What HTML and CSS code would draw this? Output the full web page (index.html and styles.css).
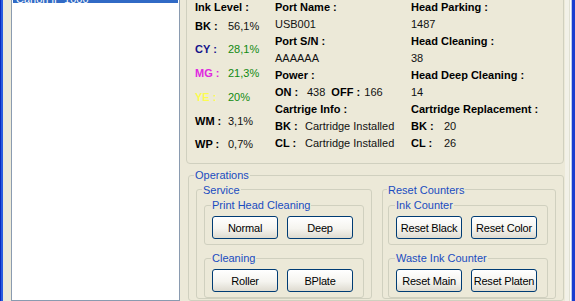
FILE: index.html
```html
<!DOCTYPE html>
<html lang="en">
<head>
    <meta charset="UTF-8">
    <meta name="viewport" content="width=device-width, initial-scale=1.0">
    <title>Printer Service Tool</title>
    <link rel="stylesheet" href="styles.css">
</head>
<body>

    <div class="window">
        <div class="edge-left"></div>

        <div class="client">
            <div class="printer-list">
                <div class="printer-item selected">Canon iP 1000</div>
            </div>

            <div class="panel">
                <div class="info-box">
                    <div class="col col-ink">
                        <div class="ink-head"><b>Ink Level :</b></div>
                        <div class="ink-row"><b class="lbl">BK :</b><span class="val">56,1%</span></div>
                        <div class="ink-row"><b class="lbl cy">CY :</b><span class="val pct">28,1%</span></div>
                        <div class="ink-row"><b class="lbl mg">MG :</b><span class="val pct">21,3%</span></div>
                        <div class="ink-row"><b class="lbl ye">YE :</b><span class="val pct">20%</span></div>
                        <div class="ink-row"><b class="lbl">WM :</b><span class="val">3,1%</span></div>
                        <div class="ink-row"><b class="lbl">WP :</b><span class="val">0,7%</span></div>
                    </div>

                    <div class="col col-port">
                        <div class="line"><b>Port Name :</b></div>
                        <div class="line val">USB001</div>
                        <div class="line"><b>Port S/N :</b></div>
                        <div class="line val">AAAAAA</div>
                        <div class="line"><b>Power :</b></div>
                        <div class="line"><b class="lbl-on">ON :</b><span class="val">438</span><b class="lbl-off">OFF :</b><span class="val">166</span></div>
                        <div class="line"><b>Cartrige Info :</b></div>
                        <div class="line"><b class="lbl-cart">BK :</b><span class="val">Cartridge Installed</span></div>
                        <div class="line"><b class="lbl-cart">CL :</b><span class="val">Cartridge Installed</span></div>
                    </div>

                    <div class="col col-head">
                        <div class="line"><b>Head Parking :</b></div>
                        <div class="line val">1487</div>
                        <div class="line"><b>Head Cleaning :</b></div>
                        <div class="line val">38</div>
                        <div class="line"><b>Head Deep Cleaning :</b></div>
                        <div class="line val">14</div>
                        <div class="line"><b>Cartridge Replacement :</b></div>
                        <div class="line"><b class="lbl">BK :</b><span class="val">20</span></div>
                        <div class="line"><b class="lbl">CL :</b><span class="val">26</span></div>
                    </div>
                </div>

                <fieldset class="group ops">
                    <legend>Operations</legend>
                    <div class="ops-row">
                        <fieldset class="group service">
                            <legend>Service</legend>
                            <fieldset class="group sub">
                                <legend>Print Head Cleaning</legend>
                                <div class="btn-row">
                                    <button class="btn">Normal</button>
                                    <button class="btn">Deep</button>
                                </div>
                            </fieldset>
                            <fieldset class="group sub">
                                <legend>Cleaning</legend>
                                <div class="btn-row">
                                    <button class="btn">Roller</button>
                                    <button class="btn">BPlate</button>
                                </div>
                            </fieldset>
                        </fieldset>

                        <fieldset class="group reset">
                            <legend>Reset Counters</legend>
                            <fieldset class="group sub">
                                <legend>Ink Counter</legend>
                                <div class="btn-row">
                                    <button class="btn">Reset Black</button>
                                    <button class="btn">Reset Color</button>
                                </div>
                            </fieldset>
                            <fieldset class="group sub">
                                <legend>Waste Ink Counter</legend>
                                <div class="btn-row">
                                    <button class="btn">Reset Main</button>
                                    <button class="btn">Reset Platen</button>
                                </div>
                            </fieldset>
                        </fieldset>
                    </div>
                </fieldset>
            </div>
        </div>

        <div class="edge-right"></div>
    </div>

</body>
</html>
```

FILE: styles.css
```css
body {
    margin: 0;
    overflow: hidden;
    background-color: #ECE9D8;
    font-family: "Liberation Sans", Arial, sans-serif;
    font-size: 11px;
    color: #000;
}

.window {
    display: flex;
    width: 575px;
    height: 301px;
    overflow: hidden;
}

.edge-left {
    flex: none;
    width: 3px;
    background: linear-gradient(to right, #0a2bbf 0 1px, #2a5ce0 1px 3px);
}

.edge-right {
    flex: none;
    width: 11px;
    background: linear-gradient(to right, #ECE9D8 0 1px, #f2f1e8 1px 5px, #e0e0d2 5px 6px, #ffffff 6px 7px, #b9c8ee 7px 8px, #1a3ccf 8px 11px);
}

.client {
    flex: 1;
    display: flex;
    gap: 6px;
    margin-top: -14px;
    padding-left: 8px;
    background-color: #ECE9D8;
}

/* printer list box */
.printer-list {
    flex: none;
    width: 169px;
    box-sizing: border-box;
    background-color: #fff;
    border: 1px solid #8a9bb0;
    padding: 4px 1px 0;
}

.printer-item {
    height: 12px;
    line-height: 16px;
    padding-left: 3px;
    overflow: hidden;
    white-space: nowrap;
}

.printer-item.selected {
    background-color: #316AC5;
    color: #fff;
}

/* right panel */
.panel {
    flex: none;
    width: 378px;
    display: flex;
    flex-direction: column;
}

.info-box {
    margin-top: 4px;
    height: 174px;
    box-sizing: border-box;
    border: 1px solid #D0D0BF;
    border-radius: 4px;
    padding: 7.5px 0 0 8px;
    display: flex;
    white-space: nowrap;
}

.col-ink {
    width: 80px;
    padding-top: 1px;
}

.col-port {
    width: 136px;
}

.col-head {
    flex: 1;
}

.ink-head {
    line-height: 15px;
}

.ink-row {
    line-height: 23.8px;
}

.line {
    line-height: 17.1px;
}

.lbl {
    display: inline-block;
    width: 33px;
}

.lbl-cart {
    display: inline-block;
    width: 30px;
}

.lbl-on {
    display: inline-block;
    width: 32px;
}

.lbl-off {
    display: inline-block;
    width: 33px;
    margin-left: 6px;
}

.val {
    font-weight: normal;
    color: #111;
}

.val.pct {
    color: #118a11;
}

.cy {
    color: #14148a;
}

.mg {
    color: #e028e0;
}

.ye {
    color: #fcfc50;
}

/* group boxes */
.group {
    margin: 0;
    min-width: 0;
    box-sizing: border-box;
    border: 1px solid #D0D0BF;
    border-radius: 3px;
}

.group legend {
    padding: 0 1px;
    line-height: 12px;
    font-size: 11px;
    color: #1a4cc0;
}

.ops {
    margin: 5px 0 0 2px;
    padding: 2.5px 7px 0 7px;
    flex: 1;
}

.ops > legend {
    margin-left: -2px;
}

.ops-row {
    display: flex;
    gap: 10px;
}

.service {
    width: 176px;
    padding: 3.5px 6px 0 7px;
}

.service > legend {
    margin-left: -2px;
}

.reset {
    width: 174px;
    padding: 3.5px 6px 0 5px;
}

.reset > legend {
    margin-left: -1px;
}

.sub {
    width: 160px;
    padding: 5px 8px 5px 7px;
}

.sub > legend {
    margin-left: -1px;
}

.sub + .sub {
    margin-top: 7px;
}

.btn-row {
    display: flex;
    gap: 9px;
}

.btn {
    width: 66px;
    height: 23px;
    padding: 0;
    border: 1px solid #003C74;
    border-radius: 3px;
    background: linear-gradient(#ffffff 0%, #f5f4ef 55%, #dedbd0 100%);
    font-family: "Liberation Sans", Arial, sans-serif;
    font-size: 11px;
    letter-spacing: -0.2px;
    color: #000;
    white-space: nowrap;
}
```
